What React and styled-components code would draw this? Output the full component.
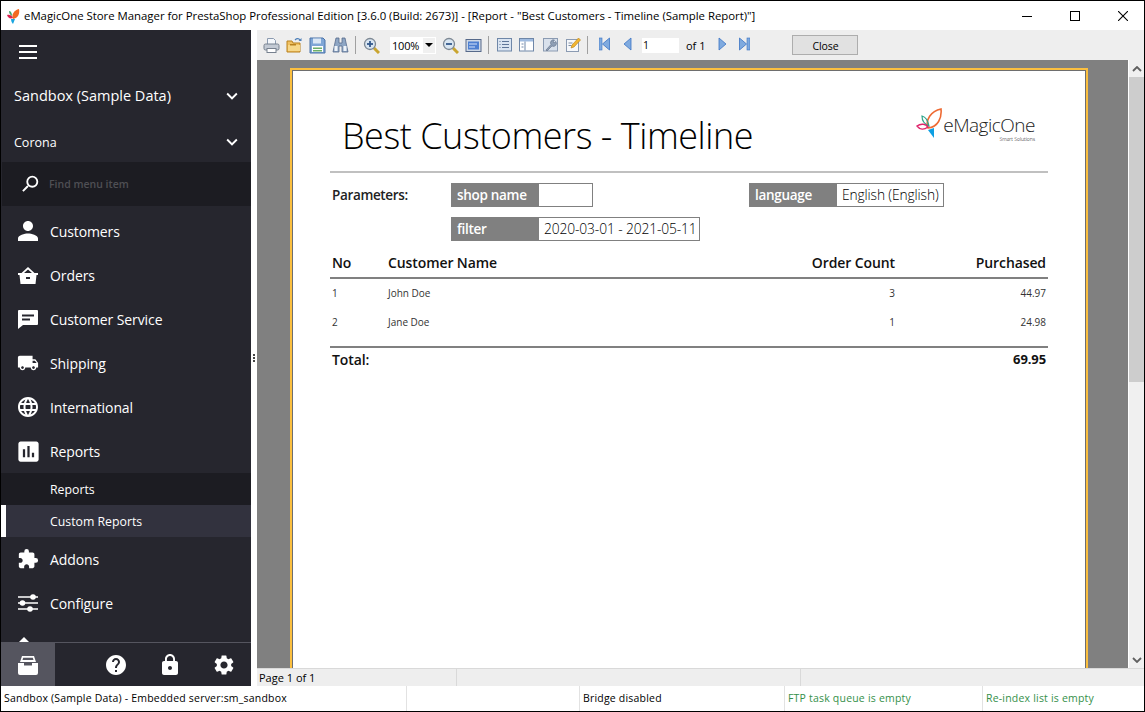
import React from 'react';
import styled, { createGlobalStyle } from 'styled-components';
import {
  MdPerson, MdLocalShipping, MdLanguage, MdAssessment,
  MdExtension, MdHelp, MdLock, MdSettings, MdKeyboardArrowDown, MdSearch,
} from 'react-icons/md';

const UI_FONT = `'Open Sans', 'Noto Sans', sans-serif`;

const GlobalStyle = createGlobalStyle`
  html, body { margin: 0; padding: 0; overflow: hidden; background: #fff; }
  * { box-sizing: border-box; }
`;

const Window = styled.div`
  width: 1145px;
  height: 712px;
  border: 1px solid #000;
  display: flex;
  flex-direction: column;
  font-family: ${UI_FONT};
  background: #fff;
  overflow: hidden;
`;

const TitleBar = styled.div`
  height: 29px;
  flex: none;
  display: flex;
  align-items: center;
  padding-left: 4px;
  background: #fff;
`;

const AppTitle = styled.div`
  margin-left: 3px;
  font-size: 11.4px;
  color: #000;
  white-space: nowrap;
  flex: 1;
  letter-spacing: -0.02px;
`;

const WinButton = styled.div`
  width: 48px;
  height: 29px;
  flex: none;
  display: flex;
  align-items: center;
  justify-content: center;
  margin-right: ${p => p.$last ? '-3px' : '0'};
`;

const Body = styled.div`
  flex: 1;
  min-height: 0;
  display: flex;
`;

const Sidebar = styled.aside`
  width: 250px;
  flex: none;
  background: #26262e;
  color: #fff;
  display: flex;
  flex-direction: column;
  position: relative;
`;

const SideScroll = styled.div`
  flex: 1;
  min-height: 0;
  overflow: hidden;
`;

const Burger = styled.div`
  height: 44px;
  padding: 15px 0 0 18px;
  display: flex;
  flex-direction: column;
  gap: 4px;
  & > i { display: block; width: 18px; height: 2px; background: #fff; }
`;

const Selector = styled.div`
  height: 44px;
  padding: ${p => p.$shift > 0 ? p.$shift : 0}px 8px ${p => p.$shift < 0 ? -p.$shift : 0}px 13px;
  display: flex;
  align-items: center;
  justify-content: space-between;
  font-size: ${p => p.$size}px;
  color: #fff;
  & > svg { flex: none; }
`;

const SearchRow = styled.div`
  height: 44px;
  background: #1c1c22;
  margin-left: 1px;
  display: flex;
  align-items: center;
  padding: 0 0 1px 17px;
  gap: 8px;
  font-size: 10.5px;
  font-weight: 600;
  color: #4f4f54;
  margin-bottom: 3px;
`;

const MenuItem = styled.div`
  height: 44px;
  display: flex;
  align-items: center;
  padding-left: 17px;
  gap: 12px;
  font-size: 14px;
  letter-spacing: -0.1px;
  color: #fff;
`;

const IconBox = styled.span`
  width: 20px;
  height: 20px;
  display: flex;
  align-items: center;
  justify-content: center;
  flex: none;
  & > svg { flex: none; }
`;

const SubMenu = styled.div`
  display: flex;
  flex-direction: column;
`;

const SubItem = styled.div`
  height: 32px;
  display: flex;
  align-items: center;
  font-size: 12.3px;
  color: #fff;
  background: ${p => p.$active ? '#32323e' : '#1c1c22'};
  border-left: ${p => p.$active ? '5px solid #fff' : 'none'};
  padding-left: ${p => p.$active ? '44px' : '49px'};
`;

const SideFooter = styled.div`
  height: 44px;
  flex: none;
  background: #26262e;
  border-top: 1px solid #55555f;
  display: flex;
  align-items: center;
`;

const FooterMain = styled.div`
  width: 54px;
  height: 43px;
  background: #55555f;
  display: flex;
  align-items: center;
  justify-content: center;
  margin-right: 34px;
`;

const FooterBtn = styled.div`
  width: 54px;
  display: flex;
  justify-content: center;
`;

const Splitter = styled.div`
  width: 6px;
  flex: none;
  background: #fff;
  display: flex;
  flex-direction: column;
  align-items: center;
  justify-content: center;
  gap: 1px;
  & > i { display: block; width: 2px; height: 2px; background: #444; }
`;

const Main = styled.main`
  flex: 1;
  min-width: 0;
  display: flex;
  flex-direction: column;
`;

const Toolbar = styled.div`
  height: 30px;
  flex: none;
  background: #eeeeee;
  display: flex;
  align-items: center;
  padding-left: 6px;
  gap: 6px;
`;

const Tool = styled.span`
  width: ${p => p.$w || 17}px;
  height: 17px;
  flex: none;
  display: block;
  margin-left: ${p => p.$ml || 0}px;
  & > svg { display: block; }
`;

const Sep = styled.span`
  width: 1px;
  height: 18px;
  flex: none;
  background: #a0a0a0;
  margin-right: ${p => p.$mr || 0}px;
`;

const ZoomCombo = styled.div`
  width: 46px;
  height: 17px;
  margin-left: 4px;
  background: #fff;
  display: flex;
  align-items: center;
  justify-content: space-between;
  padding-left: 2px;
  font-size: 11px;
  letter-spacing: -0.2px;
  color: #000;
`;

const ComboArrow = styled.span`
  width: 12px;
  height: 15px;
  background: #f0f0f0;
  margin-right: 1px;
  display: flex;
  align-items: center;
  justify-content: center;
  &::after {
    content: '';
    border-left: 4px solid transparent;
    border-right: 4px solid transparent;
    border-top: 4px solid #000;
  }
`;

const PageInput = styled.div`
  width: 37px;
  height: 15px;
  margin-left: 3px;
  background: #fff;
  font-size: 10.5px;
  line-height: 15px;
  padding-left: 1px;
  color: #000;
`;

const OfText = styled.span`
  font-size: 11px;
  color: #000;
  margin: 0 6px 0 1px;
`;

const CloseBtn = styled.button`
  width: 66px;
  height: 20px;
  margin-left: 36px;
  background: #e1e1e1;
  border: 1px solid #adadad;
  padding: 1px 0 0;
  font-family: ${UI_FONT};
  font-size: 10.5px;
  letter-spacing: -0.1px;
  color: #000;
`;

const ViewerWrap = styled.div`
  flex: 1;
  min-height: 0;
  display: flex;
`;

const Viewer = styled.div`
  flex: 1;
  min-width: 0;
  background: #808080;
  padding: 8px 0 0 33px;
  overflow: hidden;
`;

const Sheet = styled.div`
  width: 798px;
  height: 800px;
  background: #fff;
  border: 2px solid #fbbf3f;
  outline: 1px solid #6e6e6e;
  outline-offset: -3px;
  padding: 4px 0 0 38px;
`;

const ReportHead = styled.div`
  width: 718px;
  height: 99px;
  padding: 40px 0 0 12px;
  display: flex;
  justify-content: space-between;
  border-bottom: 2px solid #c0c0c0;
`;

const ReportTitle = styled.h1`
  margin: 0;
  font-size: 36px;
  font-weight: 300;
  line-height: 44px;
  letter-spacing: -0.46px;
  color: #000;
`;

const Logo = styled.div`
  display: flex;
  margin: -6px 13px 0 0;
  height: 34px;
  align-items: flex-start;
  gap: 1px;
`;

const LogoText = styled.div`
  font-size: 19px;
  line-height: 22px;
  font-weight: 300;
  color: #222;
  letter-spacing: -0.5px;
  margin-top: 6px;
  display: flex;
  flex-direction: column;
  align-items: flex-end;
`;

const LogoTag = styled.small`
  font-size: 5px;
  line-height: 6px;
  letter-spacing: 0;
  color: #000;
`;

const Params = styled.div`
  margin-top: 10px;
  width: 718px;
  display: grid;
  grid-template-columns: 121px 298px auto;
  grid-auto-rows: 24px;
  row-gap: 10px;
  justify-items: start;
`;

const ParamsLabel = styled.div`
  font-size: 13.5px;
  font-weight: 600;
  letter-spacing: -0.35px;
  line-height: 24px;
  padding-left: 2px;
  color: #222;
`;

const ParamBox = styled.div`
  height: 24px;
  display: flex;
  border: 1px solid #808080;
  grid-column: ${p => p.$col || 'auto'};
`;

const ParamName = styled.div`
  width: 87px;
  background: #808080;
  color: #fff;
  font-size: 13.5px;
  font-weight: 600;
  letter-spacing: -0.3px;
  line-height: 23px;
  padding-left: 5px;
`;

const ParamValue = styled.div`
  width: ${p => p.$w}px;
  background: #fff;
  font-size: 13.8px;
  font-weight: 300;
  letter-spacing: -0.12px;
  line-height: 22px;
  padding-left: 5px;
  color: #000;
  white-space: nowrap;
`;

const Row = styled.div`
  width: 718px;
  display: grid;
  grid-template-columns: 56px 1fr 151px 151px 2px;
  padding-left: 2px;
  align-items: center;
`;

const HeadRow = styled(Row)`
  margin-top: 10px;
  height: 28px;
  padding-bottom: 4px;
  border-bottom: 2px solid #808080;
  font-size: 14px;
  font-weight: 600;
  letter-spacing: -0.1px;
  color: #111;
`;

const DataRow = styled(Row)`
  height: 29px;
  padding-bottom: 2px;
  font-size: 10px;
  color: #333;
`;

const Cell = styled.span`
  text-align: ${p => p.$right ? 'right' : 'left'};
  grid-column: ${p => p.$col || 'auto'};
`;

const TotalRow = styled(Row)`
  height: 26px;
  margin-top: 9px;
  padding-bottom: 2px;
  border-top: 2px solid #808080;
  font-size: 14px;
  font-weight: 600;
  letter-spacing: -0.1px;
  color: #111;
`;

const TotalValue = styled(Cell)`
  font-size: 13px;
  font-weight: 700;
`;

const Scrollbar = styled.div`
  width: 16px;
  flex: none;
  background: #f0f0f0;
  border-left: 1px solid #fff;
  display: flex;
  flex-direction: column;
`;

const ScrollBtn = styled.div`
  height: 17px;
  flex: none;
  margin-top: ${p => p.$end ? 'auto' : '0'};
  display: flex;
  align-items: center;
  justify-content: center;
`;

const ScrollThumb = styled.div`
  height: 305px;
  background: #cdcdcd;
`;

const ViewerStatus = styled.div`
  height: 18px;
  flex: none;
  background: #eeeeee;
  border-top: 1px solid #d9d9d9;
  display: grid;
  grid-template-columns: 200px 344px 1fr;
  font-size: 11px;
  line-height: 18px;
  color: #000;
`;

const ViewerCell = styled.div`
  padding-left: 2px;
  border-right: ${p => p.$last ? 'none' : '1px solid #d9d9d9'};
`;

const StatusBar = styled.footer`
  height: 25px;
  flex: none;
  background: #fff;
  display: grid;
  grid-template-columns: 406px 173px 205px 198px 1fr;
  font-size: 10.5px;
  letter-spacing: 0.2px;
  line-height: 25px;
  color: #000;
`;

const StatusCell = styled.div`
  padding-left: 3px;
  white-space: nowrap;
  color: ${p => p.$ok ? '#35904a' : '#000'};
  border-right: ${p => p.$last ? 'none' : '1px solid #e2e2e2'};
`;

const AppLogo = () => (
  <svg width="16" height="16" viewBox="0 0 16 16">
    <path d="M8 11C6 7 9 2 14 1c1 5-1 9-6 10z" fill="#f26a21" />
    <path d="M2 7c2-1 5 0 6 3-3 1-5 0-6-3z" fill="#d9224f" />
    <path d="M4 3c2 0 3 2 3 5-2-1-3-3-3-5z" fill="#3fa66b" />
    <path d="M6 11h4l-2 5c-1-1-2-3-2-5z" fill="#19a5e0" />
  </svg>
);

const ReportLogo = () => (
  <svg width="26" height="32" viewBox="0 0 26 32">
    <path d="M12 20C9 12 15 3 25 1c1 9-3 18-13 19z" fill="none" stroke="#ee6a33" strokeWidth="1.6" />
    <path d="M6 8c4 1 6 5 7 10-5-2-7-5-7-10z" fill="none" stroke="#2fa58b" strokeWidth="1.2" />
    <path d="M1 18c4-3 9-2 11 1-4 3-8 3-11-1z" fill="none" stroke="#e0246c" strokeWidth="1.4" />
    <path d="M12 22l6-2v10c-2-3-4-5-6-8z" fill="#0d9fe3" />
  </svg>
);

const Printer = () => (
  <svg width="17" height="17" viewBox="0 0 17 17">
    <path d="M4.5 1.5h6l2 2v4h-8z" fill="#f4f7fb" stroke="#8c9bb0" />
    <rect x="1" y="7" width="15" height="6" rx="1.5" fill="#c3cad4" stroke="#77818f" />
    <rect x="4" y="11.500" width="9" height="4" fill="#fff" stroke="#77818f" />
  </svg>
);

const Folder = () => (
  <svg width="17" height="17" viewBox="0 0 17 17">
    <path d="M1 4h5l1 2h7v9H1z" fill="#f0c060" stroke="#b8811f" />
    <rect x="2" y="8" width="12" height="6" fill="#f7d88a" />
    <rect x="4" y="7" width="6" height="1.500" fill="#b8811f" />
    <path d="M9 3c2-2 4-1.500 5 0" fill="none" stroke="#4d7fb8" strokeWidth="1.2" />
    <path d="M15.500 1v3h-3z" fill="#4d7fb8" />
  </svg>
);

const Floppy = () => (
  <svg width="17" height="17" viewBox="0 0 17 17">
    <path d="M1 1h13l2 2v13H1z" fill="#7fa6d6" stroke="#4a72a8" />
    <rect x="4" y="1.500" width="8" height="5" fill="#dbe7f5" />
    <rect x="3" y="9" width="11" height="6" fill="#fff" />
    <rect x="4" y="10.500" width="9" height="1.500" fill="#6db06a" />
    <rect x="4" y="13" width="9" height="1.500" fill="#6db06a" />
  </svg>
);

const Binoculars = () => (
  <svg width="17" height="17" viewBox="0 0 17 17">
    <path d="M4 1h3v5h3V1h3l3 14h-6V9H7v6H1z" fill="#8ea6c4" stroke="#56698a" strokeWidth=".8" />
    <rect x="2.500" y="9" width="3" height="5" fill="#eef3f9" />
    <rect x="11.500" y="9" width="3" height="5" fill="#eef3f9" />
  </svg>
);

const Magnifier = ({ plus }) => (
  <svg width="17" height="17" viewBox="0 0 17 17">
    <path d="M10 10l6 6" stroke="#c9a530" strokeWidth="3" />
    <circle cx="7" cy="7" r="5.500" fill="#d9e6f2" stroke="#7d8894" strokeWidth="1.300" />
    <path d="M4 7h6" stroke="#34598c" strokeWidth="1.800" />
    {plus && <path d="M7 4v6" stroke="#34598c" strokeWidth="1.800" />}
  </svg>
);

const PageWide = () => (
  <svg width="17" height="17" viewBox="0 0 17 17">
    <rect x="1" y="2.500" width="15" height="12" fill="#cfd9e6" stroke="#56698a" />
    <rect x="3" y="4.500" width="11" height="8" fill="#4d7fd1" />
    <path d="M4 7h8M4 10h6" stroke="#d6e4fa" />
  </svg>
);

const Outline = () => (
  <svg width="15" height="15" viewBox="0 0 15 15">
    <rect x=".5" y="1.500" width="14" height="12.500" fill="#dbe5f2" stroke="#6f87a8" />
    <path d="M5 4.500h7M5 7.500h7M5 10.500h7" stroke="#5f7699" />
    <path d="M2.500 4.500h1M2.500 7.500h1M2.500 10.500h1" stroke="#5f7699" />
  </svg>
);

const Thumbs = () => (
  <svg width="15" height="15" viewBox="0 0 15 15">
    <rect x=".5" y="1.500" width="14" height="12.500" fill="#fff" stroke="#6f87a8" />
    <rect x="1" y="2" width="13" height="2.500" fill="#9fbbe0" />
    <path d="M6 4.500v9" stroke="#6f87a8" />
    <path d="M2.500 7h2M2.500 10h2" stroke="#6f87a8" />
  </svg>
);

const Wrench = () => (
  <svg width="15" height="15" viewBox="0 0 15 15">
    <rect x=".5" y="1.500" width="14" height="12.500" fill="#d9e1ec" stroke="#8b9bb2" />
    <path d="M3 13l5-5.500a3 3 0 0 1 3.500-4.500L10 5l1 1 1.800-1.500A3 3 0 0 1 9 9l-5 5z" fill="#8f9fb5" stroke="#5e6d84" strokeWidth=".6" />
  </svg>
);

const Pencil = () => (
  <svg width="15" height="15" viewBox="0 0 15 15">
    <rect x=".5" y="2.500" width="12" height="12" fill="#f6f8fb" stroke="#8b9bb2" />
    <path d="M2.500 6h4M2.500 8.500h3" stroke="#7f8da3" />
    <path d="M5 11l1-3 6.500-7 2 2L8 10z" fill="#f2b632" stroke="#b57f12" strokeWidth=".6" />
  </svg>
);

const Arrow = ({ dir, bar }) => (
  <svg width="11" height="14" viewBox="0 0 11 14" style={{ transform: dir === 'right' ? 'scaleX(-1)' : 'none' }}>
    {bar && <rect x="0" y="1" width="3" height="12" fill="#7faadf" stroke="#3b73c4" strokeWidth=".6" />}
    <path d={bar ? 'M10.500 1v12L3.500 7z' : 'M9 1v12L2 7z'} fill="#7faadf" stroke="#3b73c4" strokeWidth=".8" />
  </svg>
);

const InboxIcon = () => (
  <svg width="20" height="20" viewBox="0 0 20 20">
    <path fillRule="evenodd" fill="#fff" d="M4 1h12l2 6H2zM5.200 2.800L4.500 5h11l-.7-2.200z" />
    <path fill="#fff" d="M0 8h6v2.500h8V8h6v10a2 2 0 0 1-2 2H2a2 2 0 0 1-2-2z" />
  </svg>
);

const BasketIcon = () => (
  <svg width="20" height="17" viewBox="0 0 20 17">
    <path fillRule="evenodd" fill="#fff" d="M10 0l6.500 6H20v2h-1.500l-1 9h-15l-1-9H0V6h3.500zM10 2.500L6 6h8zM8 10v2h4v-2z" />
  </svg>
);

const ChatIcon = () => (
  <svg width="20" height="19" viewBox="0 0 20 19">
    <path fillRule="evenodd" fill="#fff" d="M1 0h18a1 1 0 0 1 1 1v13a1 1 0 0 1-1 1H5l-5 4V1a1 1 0 0 1 1-1zM4 4.500v2h12v-2zM4 8.500v2h8v-2z" />
  </svg>
);

const SlidersIcon = () => (
  <svg width="20" height="20" viewBox="0 0 20 20">
    <path d="M0 4h20M0 10h20M0 16h20" stroke="#fff" strokeWidth="1.600" />
    <circle cx="15" cy="4" r="2.800" fill="#fff" />
    <circle cx="4.500" cy="10" r="2.800" fill="#fff" />
    <circle cx="12" cy="16" r="2.800" fill="#fff" />
  </svg>
);

const ConnectorIcon = () => (
  <svg width="20" height="20" viewBox="0 0 20 20">
    <path d="M6 0l6 6v14H0V6z" fill="#fff" />
  </svg>
);

const menuTop = [
  ['Customers', <MdPerson size={30} color="#fff" />],
  ['Orders', <BasketIcon />],
  ['Customer Service', <ChatIcon />],
  ['Shipping', <MdLocalShipping size={22} color="#fff" />],
  ['International', <MdLanguage size={24} color="#fff" />],
  ['Reports', <MdAssessment size={27} color="#fff" />],
];

const menuBottom = [
  ['Addons', <MdExtension size={22} color="#fff" />],
  ['Configure', <SlidersIcon />],
  ['Connector', <ConnectorIcon />],
];

const MenuRow = ({ item }) => (
  <MenuItem>
    <IconBox>{item[1]}</IconBox>
    {item[0]}
  </MenuItem>
);

const App = () => (
  <>
    <GlobalStyle />
    <Window>
      <TitleBar>
        <AppLogo />
        <AppTitle>eMagicOne Store Manager for PrestaShop Professional Edition [3.6.0 (Build: 2673)] - [Report - "Best Customers - Timeline (Sample Report)"]</AppTitle>
        <WinButton>
          <svg width="10" height="10" viewBox="0 0 10 10"><path d="M0 5.500h10" stroke="#000" /></svg>
        </WinButton>
        <WinButton>
          <svg width="10" height="10" viewBox="0 0 10 10"><rect x=".5" y=".5" width="9" height="9" fill="none" stroke="#000" /></svg>
        </WinButton>
        <WinButton $last>
          <svg width="10" height="10" viewBox="0 0 10 10"><path d="M0 0l10 10M10 0L0 10" stroke="#000" strokeWidth="1.100" /></svg>
        </WinButton>
      </TitleBar>

      <Body>
        <Sidebar>
          <SideScroll>
            <Burger><i /><i /><i /></Burger>
            <Selector $shift={-1} $size={14.5}>
              Sandbox (Sample Data)
              <MdKeyboardArrowDown size={22} color="#fff" />
            </Selector>
            <Selector $shift={4} $size={12.5}>
              Corona
              <MdKeyboardArrowDown size={22} color="#fff" />
            </Selector>
            <SearchRow>
              <MdSearch size={22} color="#fff" style={{ transform: 'scaleX(-1)' }} />
              Find menu item
            </SearchRow>
            {menuTop.map(item => <MenuRow key={item[0]} item={item} />)}
            <SubMenu>
              <SubItem>Reports</SubItem>
              <SubItem $active>Custom Reports</SubItem>
            </SubMenu>
            {menuBottom.map(item => <MenuRow key={item[0]} item={item} />)}
          </SideScroll>
          <SideFooter>
            <FooterMain><InboxIcon /></FooterMain>
            <FooterBtn><MdHelp size={24} color="#fff" /></FooterBtn>
            <FooterBtn><MdLock size={24} color="#fff" /></FooterBtn>
            <FooterBtn><MdSettings size={24} color="#fff" /></FooterBtn>
          </SideFooter>
        </Sidebar>

        <Splitter><i /><i /><i /></Splitter>

        <Main>
          <Toolbar>
            <Tool><Printer /></Tool>
            <Tool><Folder /></Tool>
            <Tool><Floppy /></Tool>
            <Tool><Binoculars /></Tool>
            <Sep $mr={1} />
            <Tool><Magnifier plus /></Tool>
            <ZoomCombo>100%<ComboArrow /></ZoomCombo>
            <Tool><Magnifier /></Tool>
            <Tool><PageWide /></Tool>
            <Sep $mr={2} />
            <Tool $w={15}><Outline /></Tool>
            <Tool $w={15} $ml={1}><Thumbs /></Tool>
            <Tool $w={15} $ml={3}><Wrench /></Tool>
            <Tool $w={15} $ml={2}><Pencil /></Tool>
            <Sep $mr={2} />
            <Tool $w={11} $ml={3}><Arrow bar /></Tool>
            <Tool $w={11} $ml={6}><Arrow /></Tool>
            <PageInput>1</PageInput>
            <OfText>of 1</OfText>
            <Tool $w={11}><Arrow dir="right" /></Tool>
            <Tool $w={11} $ml={5}><Arrow dir="right" bar /></Tool>
            <CloseBtn>Close</CloseBtn>
          </Toolbar>

          <ViewerWrap>
            <Viewer>
              <Sheet>
                <ReportHead>
                  <ReportTitle>Best Customers - Timeline</ReportTitle>
                  <Logo>
                    <ReportLogo />
                    <LogoText>eMagicOne<LogoTag>Smart Solutions</LogoTag></LogoText>
                  </Logo>
                </ReportHead>
                <Params>
                  <ParamsLabel>Parameters:</ParamsLabel>
                  <ParamBox><ParamName>shop name</ParamName><ParamValue $w={53} /></ParamBox>
                  <ParamBox><ParamName>language</ParamName><ParamValue $w={106}>English (English)</ParamValue></ParamBox>
                  <ParamBox $col="2"><ParamName>filter</ParamName><ParamValue $w={160}>2020-03-01 - 2021-05-11</ParamValue></ParamBox>
                </Params>
                <HeadRow>
                  <Cell>No</Cell>
                  <Cell>Customer Name</Cell>
                  <Cell $right>Order Count</Cell>
                  <Cell $right>Purchased</Cell>
                </HeadRow>
                <DataRow>
                  <Cell>1</Cell>
                  <Cell>John Doe</Cell>
                  <Cell $right>3</Cell>
                  <Cell $right>44.97</Cell>
                </DataRow>
                <DataRow>
                  <Cell>2</Cell>
                  <Cell>Jane Doe</Cell>
                  <Cell $right>1</Cell>
                  <Cell $right>24.98</Cell>
                </DataRow>
                <TotalRow>
                  <Cell>Total:</Cell>
                  <TotalValue $right $col="4">69.95</TotalValue>
                </TotalRow>
              </Sheet>
            </Viewer>
            <Scrollbar>
              <ScrollBtn>
                <svg width="10" height="6" viewBox="0 0 10 6"><path d="M1 5l4-4 4 4" fill="none" stroke="#606060" strokeWidth="1.800" /></svg>
              </ScrollBtn>
              <ScrollThumb />
              <ScrollBtn $end>
                <svg width="10" height="6" viewBox="0 0 10 6"><path d="M1 1l4 4 4-4" fill="none" stroke="#606060" strokeWidth="1.800" /></svg>
              </ScrollBtn>
            </Scrollbar>
          </ViewerWrap>

          <ViewerStatus>
            <ViewerCell>Page 1 of 1</ViewerCell>
            <ViewerCell />
            <ViewerCell $last />
          </ViewerStatus>
        </Main>
      </Body>

      <StatusBar>
        <StatusCell>Sandbox (Sample Data) - Embedded server:sm_sandbox</StatusCell>
        <StatusCell />
        <StatusCell>Bridge disabled</StatusCell>
        <StatusCell $ok>FTP task queue is empty</StatusCell>
        <StatusCell $ok $last>Re-index list is empty</StatusCell>
      </StatusBar>
    </Window>
  </>
);

export default App;
